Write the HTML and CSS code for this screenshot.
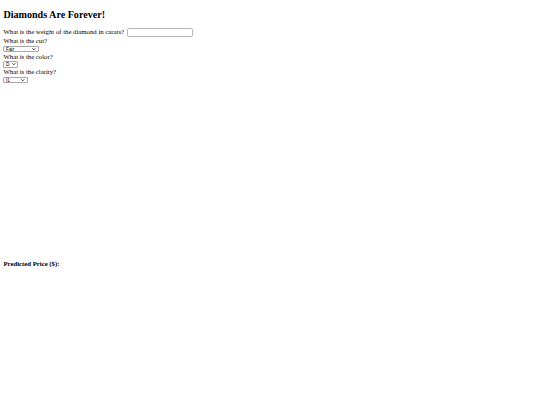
FILE: index.html
```html
<!DOCTYPE html>
<html>
<head>
<meta charset="utf-8">
<title>Diamonds Are Forever!</title>
<link rel="stylesheet" href="styles.css">
</head>
<body>
<h2 class="title">Diamonds Are Forever!</h2>
<form class="form">
<label for="carat">What is the weight of the diamond in carats?</label>
<input class="field" type="text" id="carat" name="carat"><br>
<label for="cut">What is the cut?</label>
<span class="pick-wrap">
<select class="pick pick-cut" id="cut" name="cut">
<option>Fair</option><option>Good</option><option>Very Good</option><option>Premium</option><option>Ideal</option>
</select>
<svg class="chev" viewBox="0 0 6 4" width="3.6" height="2.4"><path d="M0.6 0.6 L3 3 L5.4 0.6" fill="none" stroke="#000" stroke-width="1.4"/></svg>
</span>
<label for="color">What is the color?</label>
<span class="pick-wrap">
<select class="pick pick-color" id="color" name="color">
<option>D</option><option>E</option><option>F</option><option>G</option><option>H</option><option>I</option><option>J</option>
</select>
<svg class="chev" viewBox="0 0 6 4" width="3.6" height="2.4"><path d="M0.6 0.6 L3 3 L5.4 0.6" fill="none" stroke="#000" stroke-width="1.4"/></svg>
</span>
<label for="clarity">What is the clarity?</label>
<span class="pick-wrap">
<select class="pick pick-clarity" id="clarity" name="clarity">
<option>I1</option><option>SI2</option><option>SI1</option><option>VS2</option><option>VS1</option><option>VVS2</option><option>VVS1</option><option>IF</option>
</select>
<svg class="chev" viewBox="0 0 6 4" width="3.6" height="2.4"><path d="M0.6 0.6 L3 3 L5.4 0.6" fill="none" stroke="#000" stroke-width="1.4"/></svg>
</span>
</form>
<div class="spacer"></div>
<h4 class="result">Predicted Price ($):</h4>
</body>
</html>
```
FILE: styles.css
```css
body {
  margin: 3.4px;
  font-family: "Liberation Serif", serif;
  font-size: 6.75px;
  background: #ffffff;
  color: #000000;
}
.title {
  font-size: 10.1px;
  font-weight: bold;
  margin: 5.4px 0 8.4px;
}
.form {
  margin: 0;
}
.field {
  box-sizing: border-box;
  width: 66px;
  height: 9px;
  margin: 0 0 0 1px;
  padding: 0 2px;
  font-size: 5.6px;
  border: 1px solid #b8b8b8;
  border-radius: 2px;
  vertical-align: middle;
}
.pick-wrap {
  display: block;
  position: relative;
  width: fit-content;
  margin: 1.5px 0 0.7px;
  line-height: 0;
}
.pick {
  -webkit-appearance: none;
  appearance: none;
  box-sizing: border-box;
  height: 6.4px;
  margin: 0;
  padding: 0 0 0 1.6px;
  font-family: "Liberation Sans", sans-serif;
  font-size: 4.8px;
  line-height: normal;
  border: 0.8px solid #a8a8a8;
  border-radius: 1px;
  background: #ffffff;
  color: #000000;
}
.chev {
  position: absolute;
  right: 3.5px;
  top: 2.1px;
  display: block;
}
.pick-cut {
  width: 36px;
}
.pick-color {
  width: 15px;
}
.pick-color + .chev {
  right: 2.5px;
}
.pick-clarity {
  width: 25px;
}
.spacer {
  height: 167px;
}
.result {
  font-size: 6.75px;
  font-weight: bold;
  margin: 9px 0;
}
```
